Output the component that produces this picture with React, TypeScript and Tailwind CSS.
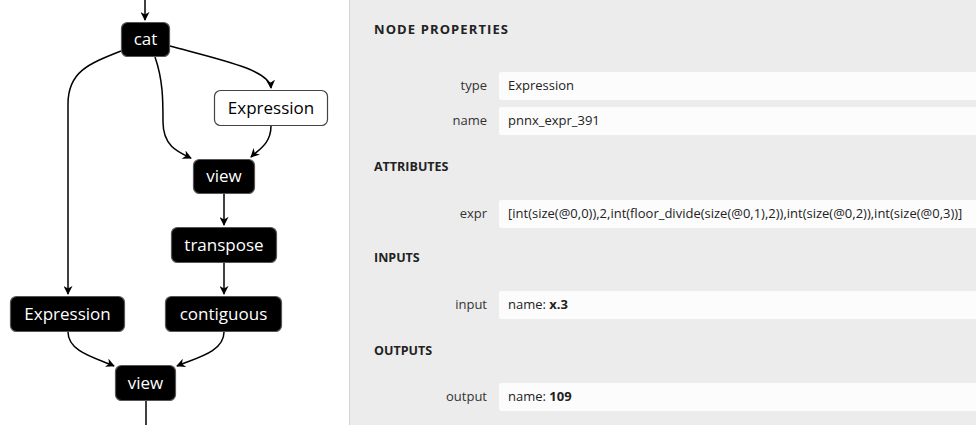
import React from 'react';

type GNode = { label: string; x: number; y: number; w: number; h: number; light?: boolean };

const nodes: GNode[] = [
  { label: 'cat', x: 121, y: 22, w: 49, h: 35 },
  { label: 'Expression', x: 214, y: 90, w: 114, h: 36, light: true },
  { label: 'view', x: 193, y: 159, w: 62, h: 35 },
  { label: 'transpose', x: 171, y: 227, w: 106, h: 36 },
  { label: 'Expression', x: 10, y: 296, w: 115, h: 36 },
  { label: 'contiguous', x: 165, y: 296, w: 117, h: 36 },
  { label: 'view', x: 115, y: 365, w: 61, h: 36 },
];

const edges = [
  'M145,0 L145,20',
  'M121,51 C88,64 68,72 68,104 L68,294',
  'M155,57 C163,80 163,100 163,122 C163,146 178,152 191,158',
  'M170,46 C222,60 270,70 271,88',
  'M271,126 C271,144 258,150 251,157',
  'M224,194 L224,225',
  'M224,263 L224,294',
  'M68,332 C68,352 96,358 114,366',
  'M224,332 C224,352 196,358 177,366',
  'M146,401 L146,425',
];

const Graph = () => (
  <svg width="349" height="425" className="block">
    <defs>
      <marker id="arr" viewBox="0 0 10 10" refX="9" refY="5" markerWidth="9" markerHeight="9" markerUnits="userSpaceOnUse" orient="auto">
        <path d="M0,0 L10,5 L0,10 L3,5 z" fill="#000" />
      </marker>
    </defs>
    {edges.map((d, i) => (
      <path
        key={i}
        d={d}
        fill="none"
        stroke="#000"
        strokeWidth={1.5}
        markerEnd={i === edges.length - 1 ? undefined : 'url(#arr)'}
      />
    ))}
    {nodes.map((n, i) => (
      <g key={i}>
        <rect
          x={n.x + 0.5}
          y={n.y + 0.5}
          width={n.w - 1}
          height={n.h - 1}
          rx={6}
          fill={n.light ? '#fff' : '#000'}
          stroke={n.light ? '#444' : '#555'}
          strokeWidth={1.2}
        />
        <text
          x={n.x + n.w / 2}
          y={n.y + n.h / 2 - 1}
          textAnchor="middle"
          dominantBaseline="central"
          fill={n.light ? '#000' : '#fff'}
          style={{ fontFamily: '"Open Sans", sans-serif', fontSize: 17 }}
        >
          {n.label}
        </text>
      </g>
    ))}
  </svg>
);

const Row = ({ label, children }: { label: string; children: React.ReactNode }) => (
  <div className="flex h-[28px] items-center">
    <div className="w-[149px] shrink-0 pr-[12px] text-right text-[13px] text-[#333]">{label}</div>
    <div className="flex h-full flex-1 items-center rounded-l-[2px] bg-[#fcfcfc] pl-[9px] text-[13px] text-[#222] whitespace-nowrap">
      {children}
    </div>
  </div>
);

const Header = ({ children, className = '' }: { children: React.ReactNode; className?: string }) => (
  <div className={`h-[20px] pl-[24px] text-[12.5px] leading-[20px] font-bold text-[#222] ${className}`}>{children}</div>
);

export default function App() {
  return (
    <div className="flex h-[425px] w-[976px] overflow-hidden bg-white" style={{ fontFamily: '"Open Sans", sans-serif' }}>
      <div className="w-[349px] shrink-0">
        <Graph />
      </div>
      <div className="flex flex-1 flex-col border-l border-[#d4d4d4] bg-[#ececec]">
        <div className="mt-[18px] h-[22px] pl-[24px] text-[13px] leading-[22px] font-bold tracking-[1.1px] text-[#222]">
          NODE PROPERTIES
        </div>
        <div className="mt-[32px] flex flex-col gap-[7px]">
          <Row label="type">Expression</Row>
          <Row label="name">pnnx_expr_391</Row>
        </div>
        <Header className="mt-[22px]">ATTRIBUTES</Header>
        <div className="mt-[23px]">
          <Row label="expr">[int(size(@0,0)),2,int(floor_divide(size(@0,1),2)),int(size(@0,2)),int(size(@0,3))]</Row>
        </div>
        <Header className="mt-[20px]">INPUTS</Header>
        <div className="mt-[23px]">
          <Row label="input">
            name:&nbsp;<span className="font-bold">x.3</span>
          </Row>
        </div>
        <Header className="mt-[22px]">OUTPUTS</Header>
        <div className="mt-[22px]">
          <Row label="output">
            name:&nbsp;<span className="font-bold">109</span>
          </Row>
        </div>
      </div>
    </div>
  );
}
